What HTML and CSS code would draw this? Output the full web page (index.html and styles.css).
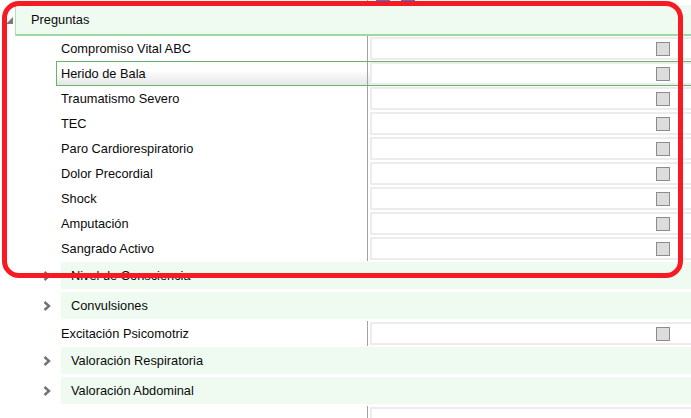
FILE: index.html
```html
<!DOCTYPE html>
<html lang="es">
<head>
    <meta charset="UTF-8">
    <meta name="viewport" content="width=device-width, initial-scale=1.0">
    <title>Preguntas</title>
    <link rel="stylesheet" href="styles.css">
</head>
<body>
    <div class="tree">
        <div class="top-strip">
            <span class="divider"></span>
            <span class="mark first"></span>
            <span class="mark"></span>
        </div>

        <!-- Expanded section -->
        <div class="section">
            <span class="expander">
                <svg width="7" height="7" viewBox="0 0 7 7"><polygon points="7,0 7,7 0,7" fill="#7a7a7a"/></svg>
            </span>
            <div class="section-title">Preguntas</div>
        </div>

        <div class="q-row"><div class="q-label">Compromiso Vital ABC</div><span class="divider"></span><div class="q-input"><span class="check"></span></div></div>
        <div class="q-row selected"><div class="q-label">Herido de Bala</div><span class="divider"></span><div class="q-input"><span class="check"></span></div></div>
        <div class="q-row"><div class="q-label">Traumatismo Severo</div><span class="divider"></span><div class="q-input"><span class="check"></span></div></div>
        <div class="q-row"><div class="q-label">TEC</div><span class="divider"></span><div class="q-input"><span class="check"></span></div></div>
        <div class="q-row"><div class="q-label">Paro Cardiorespiratorio</div><span class="divider"></span><div class="q-input"><span class="check"></span></div></div>
        <div class="q-row"><div class="q-label">Dolor Precordial</div><span class="divider"></span><div class="q-input"><span class="check"></span></div></div>
        <div class="q-row"><div class="q-label">Shock</div><span class="divider"></span><div class="q-input"><span class="check"></span></div></div>
        <div class="q-row"><div class="q-label">Amputación</div><span class="divider"></span><div class="q-input"><span class="check"></span></div></div>
        <div class="q-row"><div class="q-label">Sangrado Activo</div><span class="divider"></span><div class="q-input"><span class="check"></span></div></div>

        <!-- Collapsed groups -->
        <div class="g-row">
            <span class="chevron"><svg width="8" height="10" viewBox="0 0 8 10"><polyline points="1.5,1 6,5 1.5,9" fill="none" stroke="#727272" stroke-width="2.4"/></svg></span>
            <div class="g-box">Nivel de Consciencia</div>
        </div>
        <div class="g-row">
            <span class="chevron"><svg width="8" height="10" viewBox="0 0 8 10"><polyline points="1.5,1 6,5 1.5,9" fill="none" stroke="#727272" stroke-width="2.4"/></svg></span>
            <div class="g-box">Convulsiones</div>
        </div>
        <div class="q-row"><div class="q-label">Excitación Psicomotriz</div><span class="divider"></span><div class="q-input"><span class="check"></span></div></div>
        <div class="g-row">
            <span class="chevron"><svg width="8" height="10" viewBox="0 0 8 10"><polyline points="1.5,1 6,5 1.5,9" fill="none" stroke="#727272" stroke-width="2.4"/></svg></span>
            <div class="g-box">Valoración Respiratoria</div>
        </div>
        <div class="g-row">
            <span class="chevron"><svg width="8" height="10" viewBox="0 0 8 10"><polyline points="1.5,1 6,5 1.5,9" fill="none" stroke="#727272" stroke-width="2.4"/></svg></span>
            <div class="g-box">Valoración Abdominal</div>
        </div>
        <div class="q-row"><div class="q-label"></div><span class="divider"></span><div class="q-input"></div></div>
    </div>

    <!-- Highlight drawn over the screenshot -->
    <div class="highlight"></div>
</body>
</html>
```

FILE: styles.css
```css
html, body {
    margin: 0;
    padding: 0;
    background-color: #ffffff;
    overflow: hidden;
}
body {
    position: relative;
    width: 691px;
    height: 418px;
    font-family: "Liberation Sans", Arial, sans-serif;
    font-size: 12.8px;
    color: #0a0a0a;
}
.tree {
    width: 691px;
}
.top-strip {
    display: flex;
    height: 5px;
    padding-left: 367px;
}
.top-strip .mark {
    width: 14px;
    height: 1px;
    margin-left: 11px;
    background-color: #2d7fe3;
}
.top-strip .mark.first {
    margin-left: 8px;
}
.divider {
    width: 1px;
    background-color: #a3a3a3;
    align-self: stretch;
}
.section {
    display: flex;
    height: 31px;
}
.expander {
    width: 15px;
    display: flex;
    align-items: center;
    padding-left: 6px;
    box-sizing: border-box;
}
.section-title {
    flex: 1;
    display: flex;
    align-items: center;
    padding-left: 15px;
    background-color: #effbf1;
    border-left: 1px solid #b3e2b8;
    border-bottom: 2px solid #9dd8a4;
}
.q-row {
    display: flex;
    align-items: center;
    height: 25px;
    margin-left: 56px;
    box-sizing: border-box;
}
.q-label {
    width: 311px;
    padding-left: 5px;
    box-sizing: border-box;
    white-space: nowrap;
}
.q-row.selected {
    border: 1px solid #62b868;
    border-right: none;
    background: linear-gradient(#ffffff 35%, #e6e6e6);
}
.q-row.selected .q-label {
    width: 310px;
    padding-left: 4px;
}
.q-input {
    flex: 1;
    height: 23px;
    margin-left: 2px;
    display: flex;
    align-items: center;
    justify-content: flex-end;
    padding-right: 21px;
    background-color: #ffffff;
    border: 2px solid #ececec;
    border-right: none;
    box-sizing: border-box;
}
.check {
    width: 14px;
    height: 14px;
    background-color: #dcdcdc;
    border: 1px solid #8c8c8c;
    box-sizing: border-box;
}
.g-row {
    display: flex;
    height: 30px;
    padding-top: 1px;
    box-sizing: border-box;
}
.chevron {
    width: 61px;
    height: 27px;
    display: flex;
    align-items: center;
    padding-left: 43px;
    box-sizing: border-box;
}
.g-box {
    flex: 1;
    height: 27px;
    display: flex;
    align-items: center;
    padding-left: 10px;
    background-color: #effbf1;
}
.highlight {
    position: absolute;
    left: 2px;
    top: 1px;
    width: 681px;
    height: 277px;
    border: 5px solid #f81a22;
    border-radius: 17px;
    box-sizing: border-box;
}
```
